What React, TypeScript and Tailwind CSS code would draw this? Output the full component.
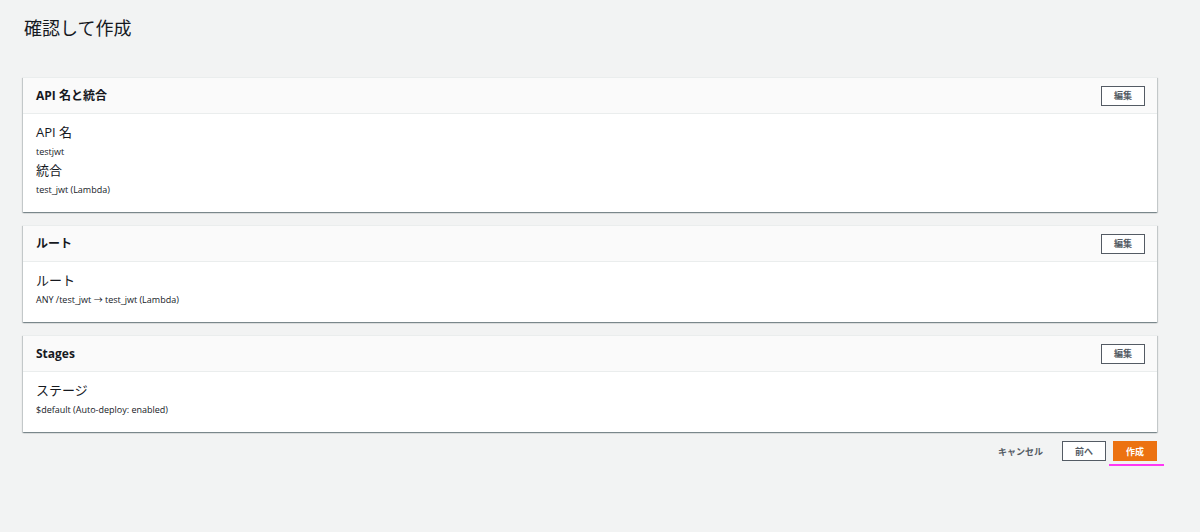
import React from 'react';

const font = { fontFamily: '"Open Sans", "Noto Sans CJK JP", sans-serif' };

interface Field {
  label: string;
  value: string;
}

function EditButton() {
  return (
    <button className="h-[20px] w-[44px] border border-[#545b64] bg-white text-[9px] font-bold text-[#545b64] leading-none">
      編集
    </button>
  );
}

function ReviewCard({ title, fields }: { title: string; fields: Field[] }) {
  return (
    <div className="bg-white border-t border-[#eaeded] shadow-[0_1px_1px_0_rgba(0,28,36,0.3),1px_1px_1px_0_rgba(0,28,36,0.15),-1px_1px_1px_0_rgba(0,28,36,0.15)]">
      <div className="flex h-[36px] items-center justify-between border-b border-[#eaeded] bg-[#fafafa] pl-[13px] pr-[12px]">
        <h2 className="text-[12px] font-bold text-[#16191f]">{title}</h2>
        <EditButton />
      </div>
      <div className="pl-[13px] pt-[9px] pb-[13px] text-[#16191f]">
        {fields.map((f) => (
          <div key={f.label}>
            <div className="text-[13px] leading-[19px]">{f.label}</div>
            <div className="text-[9px] leading-[19px]">{f.value}</div>
          </div>
        ))}
      </div>
    </div>
  );
}

export default function App() {
  return (
    <div className="min-h-[532px] w-[1200px] bg-[#f2f3f3]" style={font}>
      <div className="ml-[23px] w-[1134px] pt-[16px]">
        <h1 className="pl-[1px] text-[18px] leading-[24px] text-[#16191f]">確認して作成</h1>
        <div className="mt-[37px] flex flex-col gap-[13px]">
          <ReviewCard
            title="API 名と統合"
            fields={[
              { label: 'API 名', value: 'testjwt' },
              { label: '統合', value: 'test_jwt (Lambda)' },
            ]}
          />
          <ReviewCard
            title="ルート"
            fields={[{ label: 'ルート', value: 'ANY /test_jwt → test_jwt (Lambda)' }]}
          />
          <ReviewCard
            title="Stages"
            fields={[{ label: 'ステージ', value: '$default (Auto-deploy: enabled)' }]}
          />
        </div>
        <div className="mt-[9px] flex h-[20px] items-center justify-end">
          <button className="text-[9px] font-bold leading-none text-[#545b64]">キャンセル</button>
          <button className="ml-[19px] h-[20px] w-[44px] border border-[#545b64] bg-white text-[9px] font-bold leading-none text-[#545b64]">
            前へ
          </button>
          <div className="relative ml-[7px] flex">
            <button className="h-[20px] w-[44px] bg-[#ec7211] text-[9px] font-bold leading-none text-white">作成</button>
            <div className="absolute left-[-4px] top-[23px] h-[2px] w-[55px] bg-[#ff38f5]" />
          </div>
        </div>
      </div>
    </div>
  );
}
